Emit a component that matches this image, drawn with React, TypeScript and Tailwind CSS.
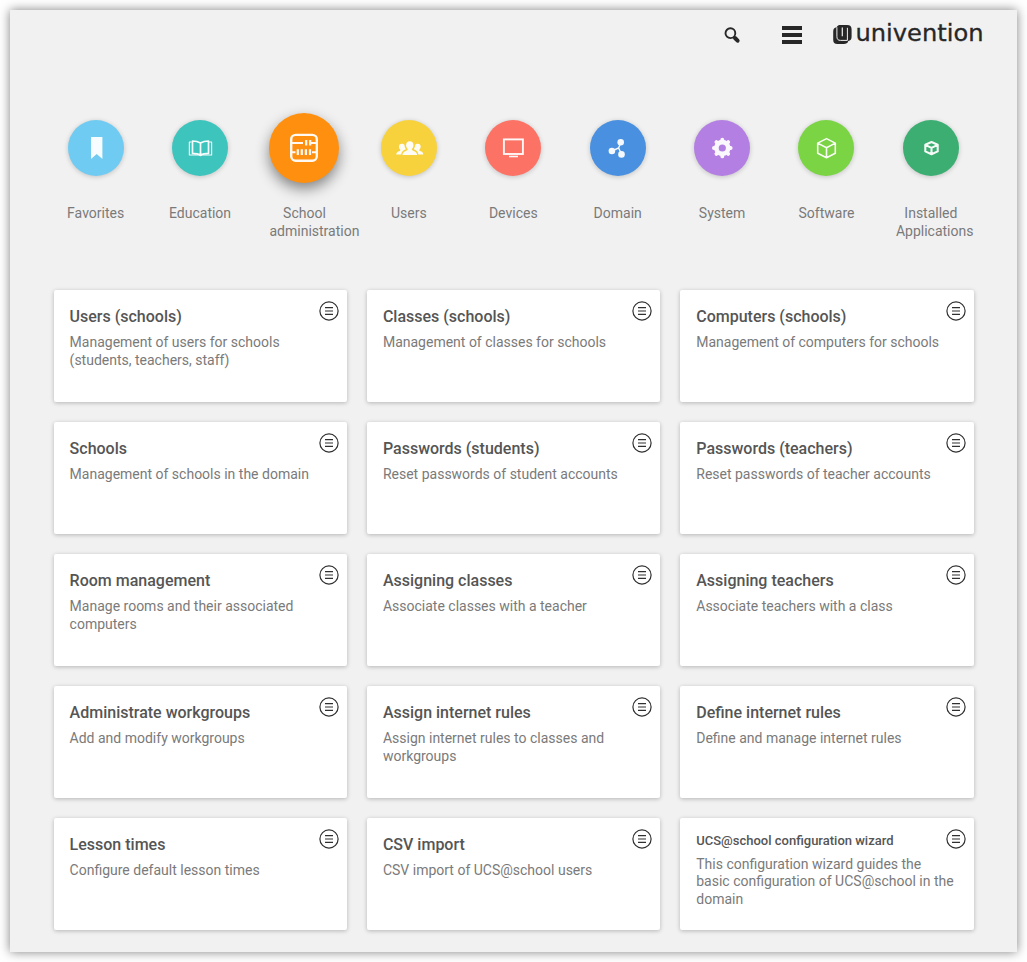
import type { ReactNode } from 'react';

type Category = { label: string; color: string; icon: ReactNode; active?: boolean };
type Module = { title: string; text: string; small?: boolean };

const Icon = ({ children }: { children: ReactNode }) => (
  <svg width="56" height="56" viewBox="0 0 56 56" fill="none" stroke="#fff" className="block opacity-95">
    {children}
  </svg>
);

const categories: Category[] = [
  {
    label: 'Favorites',
    color: 'bg-[#6fcbf1]',
    icon: <path d="M23 17h11.4v22l-5.7-5-5.7 5z" fill="#fff" stroke="none" />,
  },
  {
    label: 'Education',
    color: 'bg-[#3dc4bd]',
    icon: (
      <g strokeWidth="1.7" strokeLinejoin="round">
        <path d="M28.5 23c-2.3-1.3-5-1.9-8-2v12.3c3 .1 5.7.5 8 1.5 2.3-1 5-1.4 8-1.5V21c-3 .1-5.7.7-8 2zM28.5 23v11.5" />
        <path d="M19.5 22h-2.1v13h9.5l1.6.6 1.6-.6h9.5V22h-2.6" strokeWidth="1.2" />
      </g>
    ),
  },
  {
    label: 'School administration',
    color: 'bg-[#ff8f0e]',
    active: true,
    icon: (
      <g strokeWidth="2.4">
        <rect x="15.2" y="14.9" width="25.6" height="25.8" rx="4.5" />
        <path d="M15 23h12M33.500 23h8M15 32.200h4.500M36 32.200h5" strokeWidth="2" />
        <path d="M30.200 20v5.400M34.200 20v5.400M21.800 29.300v5.600M25.800 29.300v5.600M29.900 29.300v5.600M34 29.300v5.600" strokeWidth="2.2" />
      </g>
    ),
  },
  {
    label: 'Users',
    color: 'bg-[#f8d23c]',
    icon: (
      <g fill="#fff" stroke="none">
        <path d="M28.800 21.200c2.300 0 3.700 1.500 3.700 3.700 0 1.700-.6 3-1.500 3.900-.3 1 .2 1.500 1.200 1.900 2.400.8 3.800 1.700 4 4.300H21.400c.2-2.600 1.600-3.500 4-4.300 1-.4 1.500-.9 1.200-1.900-.9-.9-1.500-2.200-1.500-3.900 0-2.200 1.400-3.700 3.700-3.700z" />
        <path d="M20.800 23.700c1.200 0 2.100.4 2.600 1.100.1 1.800.7 3.200 1.500 4.400-2.500.9-4.300 2.300-4.700 5.300h-4.900c0-1.900 1.200-2.700 3.300-3.500.7-.3.900-.8.600-1.500-.7-.7-1.300-1.600-1.300-2.800 0-1.900 1.100-3 2.900-3z" />
        <path d="M36.800 23.700c-1.200 0-2.100.4-2.600 1.100-.1 1.800-.7 3.200-1.500 4.400 2.500.9 4.300 2.300 4.700 5.300h4.900c0-1.900-1.200-2.700-3.300-3.500-.7-.3-.9-.8-.6-1.500.7-.7 1.300-1.600 1.300-2.800 0-1.900-1.100-3-2.900-3z" />
      </g>
    ),
  },
  {
    label: 'Devices',
    color: 'bg-[#fc7366]',
    icon: (
      <>
        <rect x="18.9" y="19.4" width="19" height="14.6" strokeWidth="1.9" />
        <path d="M24 36.500h9" strokeWidth="1.6" />
      </>
    ),
  },
  {
    label: 'Domain',
    color: 'bg-[#4a90e0]',
    icon: (
      <g>
        <path d="M22 31l6.600-3 2.400-6M28.600 28l3 6.300" strokeWidth="1.4" />
        <g fill="#fff" stroke="none">
          <circle cx="30.7" cy="22.2" r="3.3" />
          <circle cx="21.9" cy="31" r="3.3" />
          <circle cx="31.5" cy="34.4" r="3.3" />
        </g>
      </g>
    ),
  },
  {
    label: 'System',
    color: 'bg-[#b47fe2]',
    icon: (
      <g>
        <circle cx="28.3" cy="28" r="5.9" strokeWidth="4.6" />
        <g strokeWidth="3.8" strokeLinecap="round">
          <path d="M28.300 19.600v.8M28.300 35.600v.8M19.900 28h.8M35.900 28h.8M22.400 22.100l.5.500M33.700 33.400l.5.500M34.200 22.100l-.5.500M22.900 33.400l-.5.500" />
        </g>
      </g>
    ),
  },
  {
    label: 'Software',
    color: 'bg-[#7ad443]',
    icon: (
      <path
        d="M28.500 18.600l8.800 4.500v10.200l-8.800 4.500-8.800-4.500V23.100zM19.700 23.100l8.800 4.700 8.800-4.700M28.500 27.800v10"
        strokeWidth="1.6"
        strokeLinejoin="round"
      />
    ),
  },
  {
    label: 'Installed Applications',
    color: 'bg-[#3cae72]',
    icon: (
      <path
        d="M28.500 22l6.200 2.700v6.700l-6.200 2.900-6.200-2.900v-6.700zM22.300 24.900l6.200 3 6.200-3M28.500 27.900v6"
        strokeWidth="2.1"
        strokeLinejoin="round"
      />
    ),
  },
];

const modules: Module[] = [
  { title: 'Users (schools)', text: 'Management of users for schools (students, teachers, staff)' },
  { title: 'Classes (schools)', text: 'Management of classes for schools' },
  { title: 'Computers (schools)', text: 'Management of computers for schools' },
  { title: 'Schools', text: 'Management of schools in the domain' },
  { title: 'Passwords (students)', text: 'Reset passwords of student accounts' },
  { title: 'Passwords (teachers)', text: 'Reset passwords of teacher accounts' },
  { title: 'Room management', text: 'Manage rooms and their associated computers' },
  { title: 'Assigning classes', text: 'Associate classes with a teacher' },
  { title: 'Assigning teachers', text: 'Associate teachers with a class' },
  { title: 'Administrate workgroups', text: 'Add and modify workgroups' },
  { title: 'Assign internet rules', text: 'Assign internet rules to classes and workgroups' },
  { title: 'Define internet rules', text: 'Define and manage internet rules' },
  { title: 'Lesson times', text: 'Configure default lesson times' },
  { title: 'CSV import', text: 'CSV import of UCS@school users' },
  {
    title: 'UCS@school configuration wizard',
    text: 'This configuration wizard guides the basic configuration of UCS@school in the domain',
    small: true,
  },
];

function Header() {
  return (
    <header className="flex h-[50px] items-center justify-end pr-[25px] text-[#272727]">
      <button aria-label="Search" className="mr-[41px]">
        <svg width="18" height="18" viewBox="0 0 18 18" fill="none" stroke="currentColor" className="block">
          <circle cx="7.4" cy="7.2" r="4.9" strokeWidth="1.9" />
          <path d="M10.800 10.800l1.200 1.200" strokeWidth="2.2" />
          <path d="M12 12l2.600 2.700" strokeWidth="4" strokeLinecap="round" />
        </svg>
      </button>
      <button aria-label="Menu" className="mr-[30px] flex w-5 flex-col gap-[3px]">
        <span className="h-1 bg-current" />
        <span className="h-1 bg-current" />
        <span className="h-1 bg-current" />
      </button>
      <svg width="160" height="34" viewBox="0 -4 160 34" className="block">
        <path
          d="M8.500 3H15c3.200 0 4.600 1.400 4.600 4.300v7.400c0 2.500-1.100 3.900-3.300 4.200-.6 2.200-2.100 3-4.500 3H5.500c-3 0-4.300-1.300-4.300-4.200V9.500C1.200 6.800 2.300 5.500 4.700 5.200 5.300 3.600 6.600 3 8.500 3z"
          fill="currentColor"
        />
        <path d="M4.900 5.300v9.200c0 2.700 1.100 3.900 3.600 3.900h6.900V5.800" fill="none" stroke="#f1f1f1" strokeWidth="1" />
        <path d="M10.300 5.500v8.700" fill="none" stroke="#f1f1f1" strokeWidth="1.2" />
        <text
          x="23.5"
          y="19"
          fontFamily="'DejaVu Sans', sans-serif"
          fontSize="22.5"
          textLength="128"
          lengthAdjust="spacingAndGlyphs"
          fill="currentColor"
          stroke="currentColor"
          strokeWidth="0.3"
        >
          univention
        </text>
      </svg>
    </header>
  );
}

function CategoryTile({ label, color, icon, active }: Category) {
  return (
    <button className="flex w-[70px] flex-col items-center">
      <span className="flex h-[70px] items-center">
        <span
          className={`flex items-center justify-center rounded-full ${color} ${
            active ? 'size-[70px] shadow-[0_6px_14px_rgba(0,0,0,0.45)]' : 'size-14 shadow-[0_1px_5px_rgba(0,0,0,0.2)]'
          }`}
        >
          <Icon>{icon}</Icon>
        </span>
      </span>
      <span className="mt-[21px] w-full text-center text-sm leading-[18px] text-[#7a7a7a]">{label}</span>
    </button>
  );
}

function ModuleCard({ title, text, small }: Module) {
  return (
    <article className="flex h-28 items-start rounded-xs bg-white pl-4 shadow-[0_1px_4px_rgba(0,0,0,0.25)]">
      <div className={small ? 'min-w-0 flex-1 pt-[14px]' : 'min-w-0 flex-1 pt-[17px]'}>
        <h2
          className={
            small
              ? 'text-[13px] leading-[18px] font-medium whitespace-nowrap text-[#555]'
              : 'text-base leading-5 font-medium whitespace-nowrap text-[#555]'
          }
        >
          {title}
        </h2>
        <p
          className={
            small
              ? 'mt-[5.6px] w-[261px] text-sm leading-[17.5px] text-[#7a7a7a]'
              : 'mt-1.5 w-[245px] text-sm leading-[18px] text-[#7a7a7a]'
          }
        >
          {text}
        </p>
      </div>
      <button aria-label="Open module menu" className="mt-[11px] mr-2">
        <svg width="20" height="20" viewBox="0 0 20 20" fill="none" stroke="#303030" className="block">
          <circle cx="10" cy="10" r="9.1" strokeWidth="1.2" />
          <path d="M6 6.700h8M6 10h8M6 13.300h8" strokeWidth="1.2" />
        </svg>
      </button>
    </article>
  );
}

export default function App() {
  return (
    <div className="h-[962px] w-[1027px] overflow-hidden bg-white p-2.5 font-['Roboto',sans-serif]">
      <main className="h-[942px] w-[1007px] bg-[#f1f1f1] shadow-[0_0_10px_rgba(0,0,0,0.5)]">
        <Header />
        <nav className="mt-[53px] ml-[50.65px] flex h-[177px] w-[905.3px] items-start justify-between">
          {categories.map((c) => (
            <CategoryTile key={c.label} {...c} />
          ))}
        </nav>
        <section className="ml-[43.6px] grid w-[920px] grid-cols-3 gap-5">
          {modules.map((m) => (
            <ModuleCard key={m.title} {...m} />
          ))}
        </section>
      </main>
    </div>
  );
}
